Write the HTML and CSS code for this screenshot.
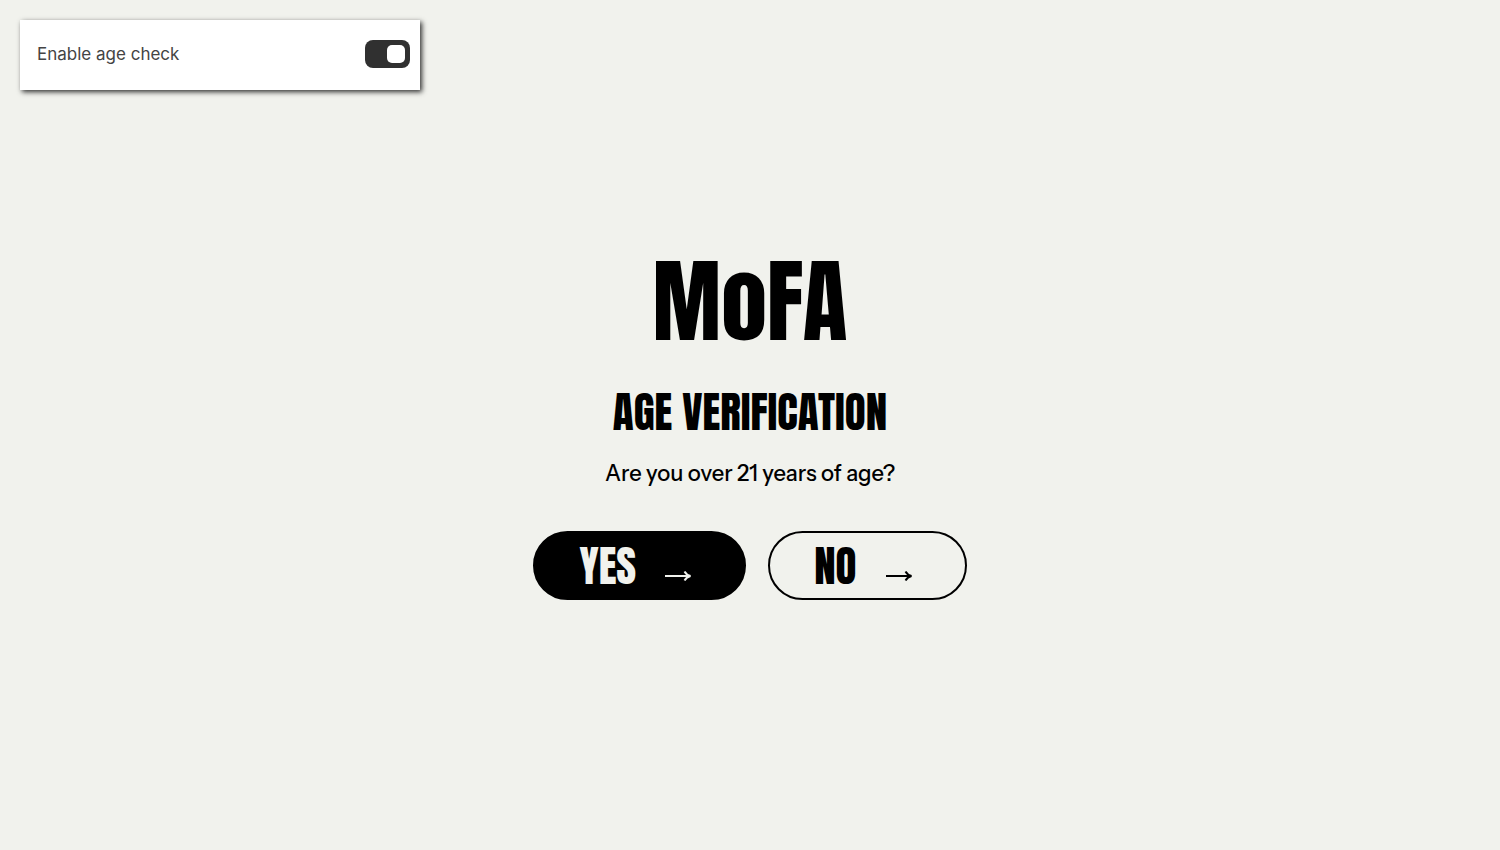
FILE: index.html
```html
<!DOCTYPE html>
<html lang="en">
<head>
<meta charset="utf-8">
<meta name="viewport" content="width=device-width, initial-scale=1">
<title>MoFA – Age verification</title>
<link rel="stylesheet" href="styles.css">
</head>
<body class="page">
<form class="panel">
  <label class="panel-label" for="age-check">Enable age check</label>
  <input class="toggle" type="checkbox" id="age-check" checked>
</form>
<main class="gate">
  <div class="logo">MoFA</div>
  <h1 class="title">AGE VERIFICATION</h1>
  <p class="question">Are you over 21 years of age?</p>
  <div class="answers">
    <button class="answer answer-yes" type="button">
      <span class="answer-label">YES</span>
      <svg class="arrow" viewBox="0 0 28 12" aria-hidden="true"><path d="M1 6H26M20.500 1.500Q22.500 5 26.500 6Q22.500 7 20.500 10.500"/></svg>
    </button>
    <button class="answer answer-no" type="button">
      <span class="answer-label">NO</span>
      <svg class="arrow" viewBox="0 0 28 12" aria-hidden="true"><path d="M1 6H26M20.500 1.500Q22.500 5 26.500 6Q22.500 7 20.500 10.500"/></svg>
    </button>
  </div>
</main>
</body>
</html>
```
FILE: styles.css
```css
* { box-sizing: border-box; }
.page {
  margin: 0;
  min-height: 100vh;
  display: grid;
  background: #f1f2ed;
  color: #000;
  font-family: "Instrument Sans", "Liberation Sans", sans-serif;
}
.panel {
  position: absolute;
  top: 20px;
  left: 20px;
  width: 400px;
  max-width: calc(100% - 40px);
  padding: 20px 10px 22px 17px;
  display: flex;
  align-items: center;
  justify-content: space-between;
  background: #fff;
  box-shadow: 2px 2px 5px rgba(0, 0, 0, 0.8);
}
.panel-label {
  color: #444;
  font: 17px/28px Inter, sans-serif;
}
.toggle {
  appearance: none;
  margin: 0;
  width: 45px;
  height: 28px;
  padding: 5px;
  display: flex;
  justify-content: flex-end;
  border-radius: 8px;
  background: #303030;
  cursor: pointer;
}
.toggle::before {
  content: "";
  width: 18px;
  border-radius: 5px;
  background: #fff;
}
.toggle:not(:checked) { justify-content: flex-start; }
.gate {
  padding: 19px 20px 10px;
  display: flex;
  flex-direction: column;
  align-items: center;
  justify-content: center;
}
.logo, .title, .answer {
  font-family: Anton, "Liberation Sans Narrow", "Liberation Sans", sans-serif;
  font-weight: 400;
}
.logo {
  font-size: 92px;
  line-height: 84px;
}
.title {
  margin: 39px 0 0;
  font-size: 43px;
  line-height: 60px;
}
.question {
  margin: 16px 0 41px;
  font-size: 22px;
  font-weight: 500;
  line-height: 32px;
}
.answers {
  display: flex;
  flex-wrap: wrap;
  justify-content: center;
  gap: 22px;
}
.answer {
  height: 69px;
  padding: 0 52px 0 44px;
  display: flex;
  align-items: center;
  gap: 28px;
  border: 2px solid #000;
  border-radius: 35px;
  background: transparent;
  color: #000;
  font-size: 43px;
  line-height: 60px;
  cursor: pointer;
}
.answer-yes {
  background: #000;
  color: #f1f2ed;
}
.arrow {
  width: 28px;
  height: 12px;
  margin-top: 20px;
  fill: none;
  stroke: currentColor;
  stroke-width: 2;
}
```
